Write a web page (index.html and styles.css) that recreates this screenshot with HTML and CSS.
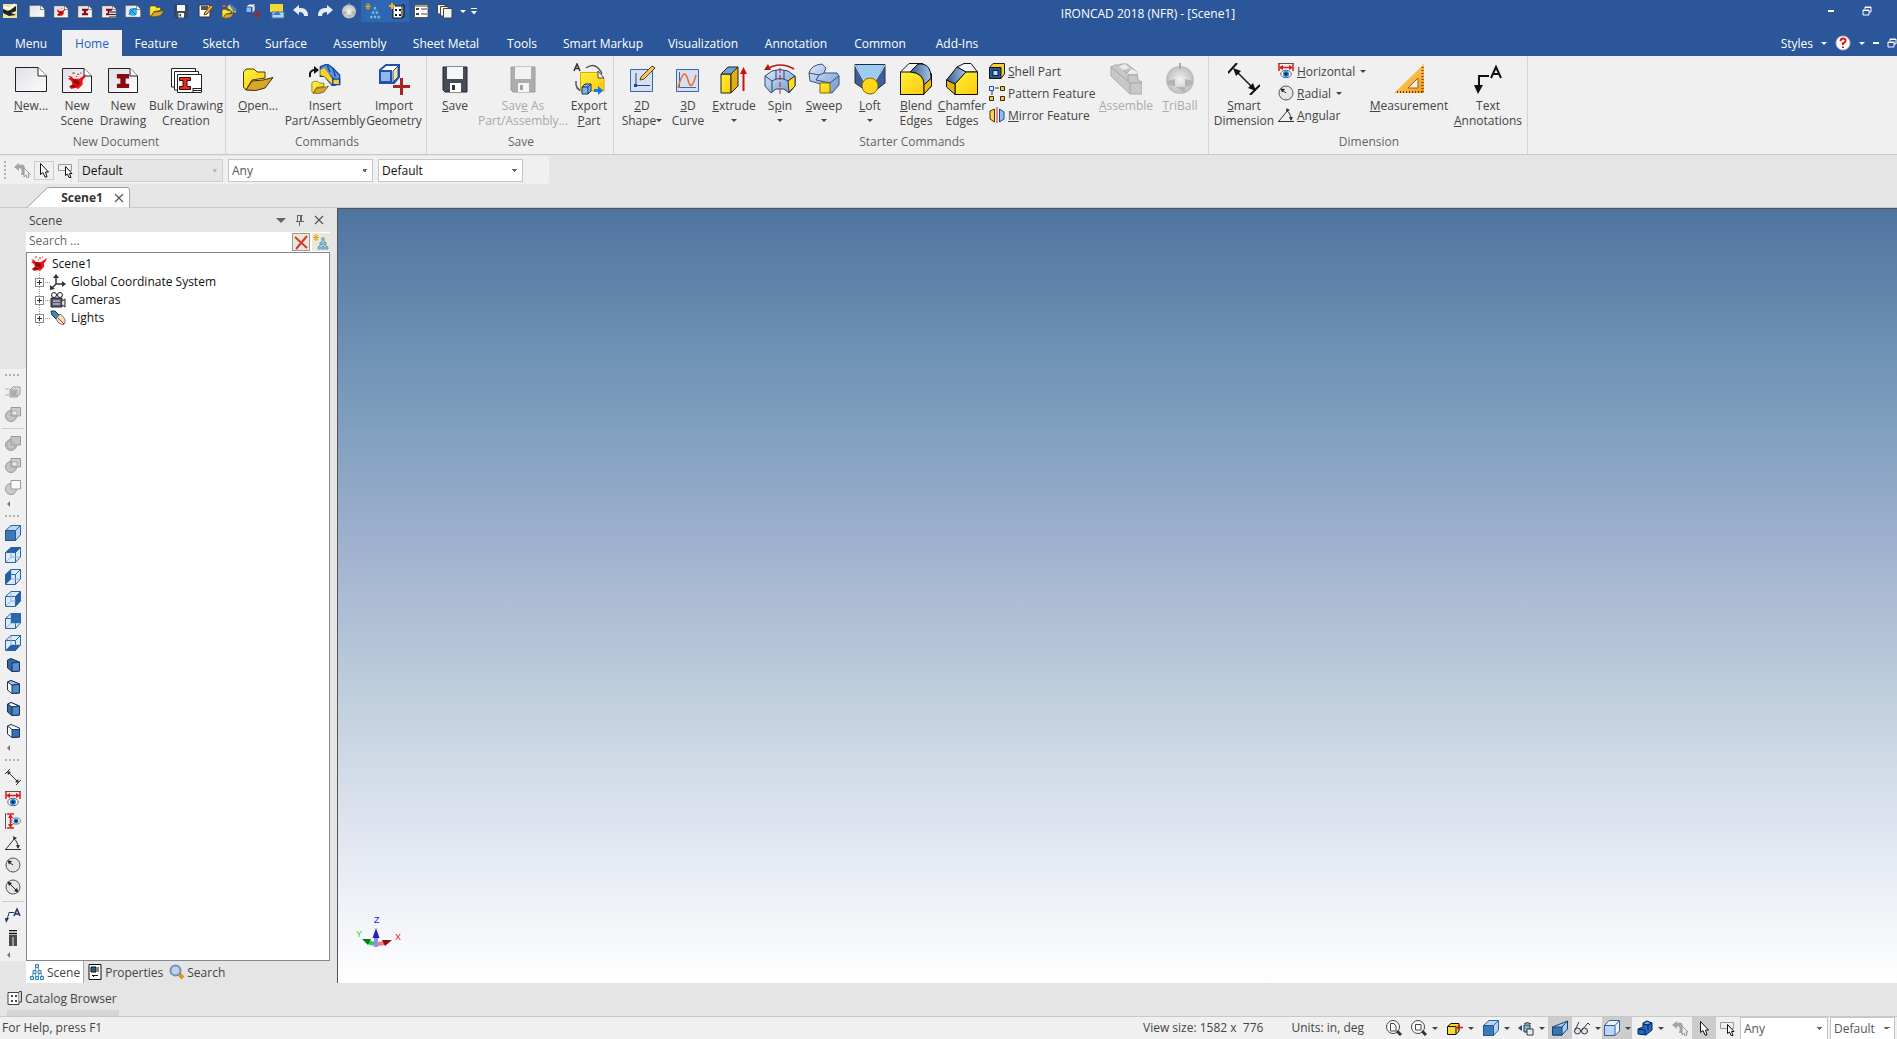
FILE: index.html
```html
<!DOCTYPE html>
<html lang="en">
<head>
<meta charset="utf-8">
<title>IRONCAD 2018 (NFR) - [Scene1]</title>
<link rel="stylesheet" href="styles.css">
</head>
<body>
<svg class="sprite" aria-hidden="true">
  <defs>
    <linearGradient id="paper" x1="0" y1="0" x2="1" y2="1"><stop offset="0" stop-color="#dfe0e6"/><stop offset="1" stop-color="#fdfdfd"/></linearGradient>
    <linearGradient id="gold" x1="0" y1="0" x2="1" y2="1"><stop offset="0" stop-color="#fff23a"/><stop offset="1" stop-color="#ffc80c"/></linearGradient>
    <linearGradient id="steel" x1="0" y1="0" x2="1" y2="1"><stop offset="0" stop-color="#dfeaf8"/><stop offset="1" stop-color="#6f97cf"/></linearGradient>
    <linearGradient id="steeldark" x1="0" y1="0" x2="1" y2="0"><stop offset="0" stop-color="#35598c"/><stop offset="1" stop-color="#a9c4e6"/></linearGradient>
    <linearGradient id="amber" x1="0" y1="0" x2="1" y2="1"><stop offset="0" stop-color="#ffe48a"/><stop offset="1" stop-color="#f09a10"/></linearGradient>
    <radialGradient id="ball"><stop offset="0" stop-color="#f4f4f4"/><stop offset="1" stop-color="#bdbdbd"/></radialGradient>
  </defs>

  <symbol id="page" viewBox="0 0 32 32"><path d="M0.500 4.500H23L31.500 13V28.500H.5Z" fill="url(#paper)" stroke="#222"/><path d="M23 4.500V13H31.500" fill="#fff" stroke="#222"/></symbol>
  <symbol id="part-red" viewBox="0 0 16 16"><path d="M0 3L3 4L5 6H10L13 4L16 2L15 5L13 7V11L9 15L7 14L3 15L1 13L4 11L3 8L0 6L2 5Z" fill="#f01414"/><path d="M4 6L10 8V12L5 10ZM1 13L4 11L8 12.500L6 14Z" fill="#930808"/><path d="M4 1h2M8 2h2M11 1h1M7 4h1" stroke="#d11"/></symbol>
  <symbol id="scene-page" viewBox="0 0 32 32"><path d="M1.500 5.500H23L30.500 13V29.500H1.500Z" fill="url(#paper)" stroke="#222"/><path d="M23 5.500V13H30.500" fill="#fff" stroke="#222"/><use href="#part-red" x="6" y="9" width="20" height="18"/></symbol>
  <symbol id="ibeam" viewBox="0 0 16 16"><path d="M1 0H15V5H11V11H15V16H1V11H5V5H1Z" fill="#870b10"/></symbol>
  <symbol id="drawing-page" viewBox="0 0 32 32"><path d="M1.500 5.500H23L30.500 13V29.500H1.500Z" fill="url(#paper)" stroke="#222"/><path d="M23 5.500V13H30.500" fill="#fff" stroke="#222"/><use href="#ibeam" x="8" y="11" width="16" height="14"/></symbol>
  <symbol id="bulk" viewBox="0 0 32 32"><path d="M1.500 5.500H25.500V24H1.500Z" fill="#fff" stroke="#222"/><path d="M4.500 8.500H28.500V27H4.500Z" fill="#fff" stroke="#222"/><path d="M7.500 11.500H31.500V29.500H7.500Z" fill="#fff" stroke="#222"/><path d="M9.500 14.500H20.500V17.500H17V23.500H20.500V26.500H9.500V23.500H13V17.500H9.500Z" fill="#f02818" stroke="#300"/><path d="M23 25.500h8M23 27.500h8M23 25v4" stroke="#222" fill="none"/></symbol>
  <symbol id="folder" viewBox="0 0 32 32"><path d="M1.500 24V9L4 6H12L15 9H23V15L10 17L4 27Z" fill="url(#gold)" stroke="#4a3c00"/><path d="M4 27L10 18L21 17L31 14.500L23 25Q14 29 4 27Z" fill="#d9a62a" stroke="#3c3000"/></symbol>
  <symbol id="blocks" viewBox="0 0 16 16"><path d="M1 2L6 0L10 3L15 8V14L10 16L4 9H1Z" fill="#5f92dc" stroke="#16489c"/><path d="M6 1L8 6M10 3L12 9M1 3L11 11" stroke="#16489c" fill="none"/><path d="M1 4L4 3L10 11V15L4 9L1 8Z" fill="#ffd21c"/><path d="M10 11H15V15H10Z" fill="#f8c840" stroke="#16489c"/></symbol>
  <symbol id="insert" viewBox="0 0 32 32"><use href="#blocks" x="10" y="1" width="22" height="22"/><use href="#folder" x="0" y="15" width="22" height="18"/><path d="M1 14Q0 7 6 7" fill="none" stroke="#111" stroke-width="2"/><path d="M5 3L10 7L5 11Z" fill="#111"/></symbol>
  <symbol id="import" viewBox="0 0 32 32"><path d="M2 7L8 2H21V14L16 20H2Z" fill="#fff" stroke="#2450a8" stroke-width="2"/><path d="M15 8L20 3V14L15 19Z" fill="#fbe39a" stroke="#2450a8"/><path d="M2 8H13V19H2Z" fill="#8db9f2" stroke="#2450a8" stroke-width="2"/><path d="M22 15h3v7h7v3h-7v7h-3v-7h-7v-3h7z" fill="#a82424"/></symbol>
  <symbol id="floppy" viewBox="0 0 32 32"><path d="M4 4H28V29H6L4 27Z" fill="#454b57" stroke="#23262d"/><path d="M8 4H24V16H8Z" fill="#f5f6f8"/><path d="M11 20H22V29H11Z" fill="#fff"/><path d="M13 22H16V27H13Z" fill="#333"/></symbol>
  <symbol id="export" viewBox="0 0 32 32"><path d="M13 5Q23-2 29 11M3 18Q2 27 10 28" fill="none" stroke="#555" stroke-width="1.500"/><path d="M7.500 9.500H25L31 15V28H7.500Z" fill="url(#gold)" stroke="#dca800"/><path d="M25 8V15H31Z" fill="#fff" stroke="#444"/><path d="M1 8L4 1L7 8M2 5.500H6" fill="none" stroke="#333" stroke-width="1.500"/><path d="M9 24L12 21H18V28L15 31H9Z" fill="#7fb1ea" stroke="#123468"/><path d="M9 24H15V31M15 24L18 21" fill="none" stroke="#123468"/><path d="M21 26H25V23L30 27.500L25 32V29H21Z" fill="#1672f4"/></symbol>
  <symbol id="shape2d" viewBox="0 0 32 32"><path d="M4.500 6.500H26.500V28.500H4.500Z" fill="#d9dfee" stroke="#2d6cb0"/><path d="M10 10V22.500H24" stroke="#174c80" fill="none"/><path d="M8 21h3v3h-3z" fill="#174c80"/><path d="M15 14L26 3L29 5L18 16L14 17Z" fill="#f5c95b" stroke="#5a3a20"/></symbol>
  <symbol id="curve3d" viewBox="0 0 32 32"><path d="M4.500 6.500H26.500V28.500H4.500Z" fill="#d9dfee" stroke="#2d6cb0"/><path d="M7.500 9V24.500H24" fill="none" stroke="#2d6cb0"/><path d="M6 25Q12 2 16 17Q19 30 24 12" fill="none" stroke="#f06a22" stroke-width="1.500"/></symbol>
  <symbol id="extrude" viewBox="0 0 32 32"><path d="M3 11H13V30H3Z" fill="url(#gold)" stroke="#222"/><path d="M3 11L10 4H20L13 11Z" fill="#6fa1dd" stroke="#222"/><path d="M13 11L20 4V23L13 30Z" fill="#e0b012" stroke="#222"/><path d="M25.500 28V9" stroke="#d01010" stroke-width="2"/><path d="M22 11L25.500 4L29 11Z" fill="#d01010"/></symbol>
  <symbol id="spin" viewBox="0 0 32 32"><path d="M1 13L8 8Q16 5 24 8L31 13V23L25 30L20 26H12L7 30L1 23Z" fill="url(#steel)" stroke="#2b4672"/><path d="M1 13L8 18Q16 13 24 18L31 13M8 18V29M12 7V16M20 7V16" stroke="#2b4672" fill="none"/><path d="M24 18L31 13V23L25 29Z" fill="#ffdc1c" stroke="#333"/><path d="M3 6Q16-2 30 6" stroke="#b01818" fill="none" stroke-width="1.500"/><path d="M0 7L4 1L7 7Z" fill="#b01818"/><path d="M16 5V31" stroke="#d01818" stroke-dasharray="5 2"/></symbol>
  <symbol id="sweep" viewBox="0 0 32 32"><path d="M1 10Q3 2 14 1L18 5L16 10L29 10L31 13V22L24 30L13 28V21L2 18Z" fill="url(#steel)" stroke="#334f80"/><path d="M1 10L11 12L8 17L22 20L31 13M11 12L16 10" fill="none" stroke="#334f80"/><path d="M12 20H22V30H12Z" fill="url(#gold)" stroke="#8c6400"/></symbol>
  <symbol id="loft" viewBox="0 0 32 32"><path d="M1 1.500H31V20L17 31L1 20Z" fill="#405f92" stroke="#1f2c48"/><path d="M2 2H30L21 18H10Z" fill="#9bcdf2"/><path d="M1 2L10 18M31 2L21 18" stroke="#dceaff"/><circle cx="16" cy="23" r="8" fill="#ffd61a" stroke="#8e6900"/></symbol>
  <symbol id="blend" viewBox="0 0 32 32"><path d="M.5 9L9 .5H23L31.500 11V23L23 31.500H.5Z" fill="#f2f4f8" stroke="#111"/><path d="M10 9L18 1H22Q31 2 31 15L24 22Q24 10 10 9Z" fill="url(#steeldark)" stroke="#111"/><path d="M.5 9H10Q24 10 24 22V31.500H.5Z" fill="url(#gold)" stroke="#111"/><path d="M24 22L31.500 15V23L24 31Z" fill="#ecb90c" stroke="#111"/></symbol>
  <symbol id="chamfer" viewBox="0 0 32 32"><path d="M11 4L18 .5H25L31.500 9H20Z" fill="#f2f4f8" stroke="#111"/><path d="M.5 17L11 4L20 9L9 21Z" fill="url(#steeldark)" stroke="#111"/><path d="M9 21L20 9H31.500V31.500H9Z" fill="url(#gold)" stroke="#111"/><path d="M.5 17L9 21V31.500L.5 24Z" fill="#e6b210" stroke="#111"/></symbol>
  <symbol id="shell" viewBox="0 0 16 16"><path d="M.5 4.500L4 .5H15.500V11L12 15.500H.5Z" fill="#f6cf35" stroke="#222"/><path d="M.5 4.500H12V15.500H.5Z" fill="#26558f" stroke="#111"/><path d="M4 7.500H9V12.500H4Z" fill="#b9dcfa" stroke="#0b2040"/></symbol>
  <symbol id="pattern" viewBox="0 0 16 16"><path d="M3 5V10M6 3H10" stroke="#333"/><path d="M.5 1.500h4v4h-4z" fill="#e8f2ff" stroke="#1748b8"/><path d="M11.500 1.500h4v4h-4zM.5 11.500h4v4h-4zM11.500 11.500h4v4h-4z" fill="#f5c94a" stroke="#3a2c00"/></symbol>
  <symbol id="mirror" viewBox="0 0 16 16"><path d="M5.500 2V15L1 12V4Z" fill="#f8d648" stroke="#40330a"/><path d="M10.500 2L15 5V12L10.500 15Z" fill="#8fbdf4" stroke="#1748a0"/><path d="M8 0V16" stroke="#e01818"/></symbol>
  <symbol id="assemble" viewBox="0 0 32 32"><path d="M1 4L5 2H9L12 1H17L21 4L27 9L28 17L32 19V31H20L1 13Z" fill="#c8c8c8" stroke="#aaa"/><path d="M1 4L20 20H32M20 20V31M16 10L21 6M27 12H18V18M18 11L12 6" stroke="#a4a4a4" fill="none"/><path d="M9 3L15 1L19 5L13 7ZM17 11L21 6L26 8L28 11Z" fill="#ececec"/></symbol>
  <symbol id="triball" viewBox="0 0 32 32"><circle cx="16" cy="17" r="14" fill="url(#ball)"/><path d="M16 0V6" stroke="#aaa" stroke-width="2"/><path d="M3 18L11 16V23L4 22M29 18L21 16V24L28 22M12 24H21V30" fill="#b3b3b3"/></symbol>
  <symbol id="smartdim" viewBox="0 0 32 32"><path d="M0 10L9 0M22 32L32 22" stroke="#111" stroke-width="2"/><path d="M8 8L25 25" stroke="#111" stroke-width="1.500"/><path d="M5 5L13 8L8 13ZM28 28L20 25L25 20Z" fill="#111"/></symbol>
  <symbol id="measure" viewBox="0 0 32 32"><path d="M1 30L31 1V30Z" fill="url(#amber)"/><path d="M15 25L25 15V25Z" fill="#f3eee4" stroke="#a65d16"/><path d="M4 29H30M29.500 4V30" stroke="#5b3b1a" stroke-width="2" stroke-dasharray="1 2"/></symbol>
  <symbol id="textnote" viewBox="0 0 32 32"><path d="M17 13H7V24" fill="none" stroke="#111" stroke-width="2"/><path d="M2 22H11L6 31Z" fill="#111"/><path d="M19 15L24 4L29 15M21 11H27" fill="none" stroke="#111" stroke-width="2"/></symbol>
  <symbol id="eye" viewBox="0 0 16 16"><ellipse cx="8" cy="8" rx="7" ry="5" fill="#fff" stroke="#333"/><circle cx="8" cy="8" r="4" fill="#1484dc"/><circle cx="8" cy="8" r="2" fill="#06254a"/></symbol>
  <symbol id="horizontal" viewBox="0 0 16 16"><path d="M0 .5H16" stroke="#555"/><path d="M1 1V8M15 1V8M2 4.500H14" stroke="#e01818" stroke-width="1.500"/><path d="M1 4.500L5 2V7ZM15 4.500L11 2V7Z" fill="#e01818"/><use href="#eye" x="2" y="5" width="12" height="12"/></symbol>
  <symbol id="vertical" viewBox="0 0 16 16"><path d="M.5 0V16" stroke="#555"/><path d="M2 1H9M2 15H9M5.500 2V14" stroke="#e01818" stroke-width="1.500"/><path d="M5.500 1L3 5H8ZM5.500 15L3 11H8Z" fill="#e01818"/><use href="#eye" x="6" y="3" width="10" height="10"/></symbol>
  <symbol id="radial" viewBox="0 0 16 16"><circle cx="8" cy="8" r="7" fill="#e6e6e6" stroke="#555"/><path d="M8 8L4 5" stroke="#222"/><path d="M2.500 3.500L7 4L4 7.500Z" fill="#222"/></symbol>
  <symbol id="diameter" viewBox="0 0 16 16"><circle cx="8" cy="8" r="7" fill="#e6e6e6" stroke="#555"/><path d="M4 4L12 12" stroke="#222"/><path d="M2.500 2.500L7 4L4 7ZM13.500 13.500L9 12L12 9Z" fill="#222"/></symbol>
  <symbol id="angular" viewBox="0 0 16 16"><path d="M0 14.500H16M1 14L10 3M8 3Q13 6 13 13" stroke="#333" fill="none"/><path d="M8 1L12 3L9 5ZM11 10H15L13 14Z" fill="#333"/></symbol>
  <symbol id="linear" viewBox="0 0 16 16"><path d="M0 5L5 0M11 16L16 11M3 3L13 13" stroke="#333"/><path d="M2 2L6 3L3 6ZM14 14L10 13L13 10Z" fill="#333"/></symbol>
  <symbol id="leader" viewBox="0 0 16 16"><path d="M9 4.500H4L2 12" fill="none" stroke="#1b3765"/><path d="M0 10H4L1 15Z" fill="#1b3765"/><path d="M9 8L12 1L15 8M10 6H14" fill="none" stroke="#1b3765" stroke-width="1.500"/></symbol>
  <symbol id="bolt" viewBox="0 0 16 16"><path d="M4 .5H12M4 3.500H12M4 6H12" stroke="#111" stroke-width="1.500"/><path d="M4 7H12V16H4Z" fill="#4b4b4b"/><path d="M7 7h2v9h-2z" fill="#999"/></symbol>

  <symbol id="redo-cursor" viewBox="0 0 16 16"><path d="M0 5L5 1V3Q11 1 11 8L10 13H7Q9 6 5 6V9Z" fill="#a5a5a5"/><path d="M10 6V15L12 13L13 16L15 15L14 12H16Z" fill="#eee" stroke="#999"/></symbol>
  <symbol id="cursor" viewBox="0 0 16 16"><path d="M4.500 1.500V12.500L7 10.500L9 15H11L9.500 10H12.500Z" fill="#fff" stroke="#111"/></symbol>
  <symbol id="box-cursor" viewBox="0 0 16 16"><path d="M.5 2.500H13.500V8.500H.5Z" fill="none" stroke="#999"/><path d="M7.500 4.500V13.500L9.500 12L11 15.500H13L11.500 11.500H14Z" fill="#fff" stroke="#111"/></symbol>

  <symbol id="app" viewBox="0 0 16 16"><path d="M1 1H15V15H1Z" fill="#e9e3a4"/><path d="M1 6L6 8L14 3V8L9 10L14 12L7 13L1 10Z" fill="#222"/><path d="M2 4L8 6L13 1" stroke="#fff" stroke-width="2" fill="none"/></symbol>
  <symbol id="drawing-list" viewBox="0 0 16 16"><use href="#drawing-page" width="16" height="16"/><path d="M8 8h7v7h-7z" fill="#ddd"/><path d="M8 9h7M8 11.500h7M8 14h7" stroke="#222"/></symbol>
  <symbol id="web-page" viewBox="0 0 16 16"><use href="#page" width="16" height="16"/><circle cx="8" cy="9" r="4" fill="#35b7e8"/><path d="M4 12Q7 4 12 6M5 6L11 12" stroke="#1565b8" fill="none"/></symbol>
  <symbol id="save-pen" viewBox="0 0 16 16"><path d="M2 2H13V14H2Z" fill="#fff" stroke="#333"/><path d="M4 3h7v4h-7z" fill="#555"/><path d="M7 12L8 9L14 2L16 4L10 11Z" fill="#f4b23a" stroke="#6a4216"/></symbol>
  <symbol id="folder-blocks" viewBox="0 0 16 16"><use href="#blocks" x="6" y="0" width="10" height="11"/><use href="#folder" x="0" y="4" width="14" height="13"/><path d="M1 3h4" stroke="#e44" stroke-width="2"/></symbol>
  <symbol id="export-small" viewBox="0 0 16 16"><path d="M1 1H14V9H1Z" fill="#f6d633"/><path d="M3 9H15V15H3Z" fill="#b9d4ec" stroke="#4178b4"/><path d="M3 12L9 8L12 12" fill="#3b7ad0"/></symbol>
  <symbol id="undo" viewBox="0 0 16 16"><path d="M0 7L6 2V5Q15 4 15 13H11Q11 9 6 9V12Z" fill="#e8edf5"/></symbol>
  <symbol id="redo" viewBox="0 0 16 16"><path d="M16 7L10 2V5Q1 4 1 13H5Q5 9 10 9V12Z" fill="#e8edf5"/></symbol>
  <symbol id="tree" viewBox="0 0 16 16"><path d="M8 2L5 8L2 14M8 2L11 8L14 14M5 8L8 14M11 8L8 14" stroke="#4e93bd" fill="none"/><path d="M6.500 .5h3v3h-3zM4 6.500h3v3H4zM9 6.500h3v3H9zM1.500 12.500h3v3h-3zM6.500 12.500h3v3h-3zM11.500 12.500h3v3h-3z" fill="#c3e0f0" stroke="#3282b4"/></symbol>
  <symbol id="tree-star" viewBox="0 0 16 16"><use href="#tree" x="4" y="3" width="12" height="13"/><path d="M3 0V7M0 3.500H6M1 1L5 6M5 1L1 6" stroke="#e5a51c"/></symbol>
  <symbol id="catalog-star" viewBox="0 0 16 16"><path d="M4 3H13V15H4Z" fill="#fff" stroke="#111"/><path d="M13 2h2v12h-2" fill="#777" stroke="#111"/><path d="M6 6h2v2H6zM10 6h2v2h-2zM6 11h2v2H6zM10 11h2v2h-2z" fill="#111"/><path d="M3 0V6M0 3H6" stroke="#f2b51c" stroke-width="2"/></symbol>
  <symbol id="catalog" viewBox="0 0 16 16"><path d="M1 2.500H12V14.500H1Z" fill="#fff" stroke="#444"/><path d="M12 1.500H14.500V12H12" fill="#ccc" stroke="#444"/><path d="M4 5h2v2H4zM8 5h2v2H8zM4 10h2v2H4zM8 10h2v2H8z" fill="#444"/></symbol>
  <symbol id="listview" viewBox="0 0 16 16"><path d="M1.500 1.500H15V14.500H1.500Z" fill="#fff" stroke="#555"/><path d="M3 5h3v2H3zM3 10h3v2H3z" fill="#444"/><path d="M8 6h6M8 11h6M2 3h13" stroke="#444"/></symbol>
  <symbol id="stack" viewBox="0 0 16 16"><path d="M.5 1.500H8V11H.5Z" fill="#f2f2f2" stroke="#444"/><path d="M3.500 3.500H11V13H3.500Z" fill="#f2f2f2" stroke="#444"/><path d="M6.500 5.500H15V15H6.500Z" fill="#f2f2f2" stroke="#444"/></symbol>
  <symbol id="overflow" viewBox="0 0 10 10"><path d="M2 2.500H8" stroke="#fff"/><path d="M2 5H8L5 8.500Z" fill="#fff"/></symbol>
  <symbol id="restore" viewBox="0 0 10 10"><path d="M3 3V1H9V6H7M3 1.500H9M1 4.500H7" fill="none" stroke="#fff" stroke-width="1"/><path d="M1 4H7V9H1Z" fill="none" stroke="#fff"/></symbol>
  <symbol id="help" viewBox="0 0 16 16"><circle cx="8" cy="8" r="7" fill="#fff" stroke="#bbb"/><path d="M5.500 6Q6 3.500 8 3.500Q11 3.500 10.500 6Q10 7.500 8 8.500V10M8 11.500V13" stroke="#e01010" stroke-width="2" fill="none"/></symbol>
  <symbol id="pin" viewBox="0 0 16 16"><path d="M5.500 3V9M5 3.500H10.500M9.500 3V9M8.500 3V9M4 9.500H12M7.500 10V14" stroke="#666" fill="none"/></symbol>
  <symbol id="close" viewBox="0 0 16 16"><path d="M4 4L12 12M12 4L4 12" stroke="#555" stroke-width="1.200"/></symbol>
  <symbol id="redx" viewBox="0 0 16 16"><path d="M2 3L14 14M14 2L3 15" stroke="#d43a35" stroke-width="2"/></symbol>
  <symbol id="axes" viewBox="0 0 16 16"><path d="M6 2V10H14M6 10L2 14" stroke="#333" stroke-width="1.500" fill="none"/><path d="M3 4L6 0L9 4ZM12 7L16 10L12 13ZM0 16V11L5 15Z" fill="#333"/></symbol>
  <symbol id="camera" viewBox="0 0 16 16"><circle cx="4" cy="3" r="2.500" fill="#fff" stroke="#222"/><circle cx="10" cy="3" r="2.500" fill="#fff" stroke="#222"/><path d="M1 6H12V15H1Z" fill="#555970" stroke="#222"/><path d="M12 9L15 7V15L12 13" fill="#ddd" stroke="#222"/><path d="M3 9h7M3 12h7" stroke="#e8e8f0"/></symbol>
  <symbol id="light" viewBox="0 0 16 16"><path d="M1 1L5 1L9 5L6 9L2 5Z" fill="#3f87b8" stroke="#234"/><path d="M10 4Q16 8 15 13L13 15Q8 14 6 9Z" fill="#f7e4bc" stroke="#777"/><path d="M8 8L14 14" stroke="#e02020"/></symbol>
  <symbol id="props" viewBox="0 0 16 16"><path d="M2 .5H14V15.500H2Z" fill="#fff" stroke="#111"/><path d="M4 3H9V8H4Z" fill="#2c5e94" stroke="#111"/><path d="M11 3v5M5 11.500h6M5 11l2 2" stroke="#111"/></symbol>
  <symbol id="lens" viewBox="0 0 16 16"><path d="M10 10L14 14" stroke="#d99a1e" stroke-width="4"/><circle cx="6.500" cy="6.500" r="5" fill="#b8d2f2" stroke="#7d8cae" stroke-width="2"/></symbol>

  <symbol id="g-cube" viewBox="0 0 16 16"><path d="M5 6L8 3H15V10L12 13H5Z" fill="#ddd" stroke="#999"/><path d="M5 6H12V13" fill="none" stroke="#999"/><path d="M6 7h5v5H6z" fill="#aaa"/><path d="M0 5h4M0 11h4" stroke="#aaa"/></symbol>
  <symbol id="g-union" viewBox="0 0 16 16"><circle cx="6" cy="10" r="5.500" fill="#c4c4c4" stroke="#999"/><path d="M6 1.500H15.500V10H6Z" fill="#c4c4c4" stroke="#999"/><circle cx="6" cy="10" r="4" fill="none" stroke="#adadad"/></symbol>
  <symbol id="g-sub" viewBox="0 0 16 16"><circle cx="6" cy="10" r="5.500" fill="#c4c4c4" stroke="#999"/><path d="M6 1.500H15.500V10H6Z" fill="#ccc" stroke="#999"/><path d="M7 5h5v4h-5z" fill="#eee" stroke="#aaa"/></symbol>
  <symbol id="g-int" viewBox="0 0 16 16"><circle cx="6" cy="10" r="5.500" fill="#ccc" stroke="#999"/><path d="M6 1.500H15.500V10H6Z" fill="#fafafa" stroke="#999"/></symbol>

  <symbol id="c-base" viewBox="0 0 16 16"><path d="M.5 5.500L6 .5H15.500V10L10.500 15.500H.5Z" fill="#dcebfa" stroke="#2a64a6"/><path d="M.5 5.500H10.500V15.500M10.500 5.500L15.500 .5" fill="none" stroke="#2a64a6"/><path d="M6 1V10H15M6 10L1 15" fill="none" stroke="#8db4dc"/></symbol>
  <symbol id="c-front" viewBox="0 0 16 16"><path d="M.5 5.500L6 .5H15.500V10L10.500 15.500H.5Z" fill="#b8d6f4" stroke="#2a64a6"/><path d="M10.500 5.500L15.500 .5" stroke="#2a64a6"/><path d="M.5 5.500H10.500V15.500H.5Z" fill="#3d78b8" stroke="#1f5698"/></symbol>
  <symbol id="c-top" viewBox="0 0 16 16"><use href="#c-base"/><path d="M.5 5.500L6 .5H15.500L10.500 5.500Z" fill="#2360a5"/></symbol>
  <symbol id="c-left" viewBox="0 0 16 16"><use href="#c-base"/><path d="M.5 5.500L6 .5V10L.5 15.500Z" fill="#2360a5"/></symbol>
  <symbol id="c-right" viewBox="0 0 16 16"><use href="#c-base"/><path d="M10.500 5.500L15.500 .5V10L10.500 15.500Z" fill="#2360a5"/></symbol>
  <symbol id="c-back" viewBox="0 0 16 16"><use href="#c-base"/><path d="M6 .5H15.500V10H6Z" fill="#2b68ac"/></symbol>
  <symbol id="c-bottom" viewBox="0 0 16 16"><use href="#c-base"/><path d="M.5 15.500L6 10H15.500L10.500 15.500Z" fill="#2360a5"/></symbol>
  <symbol id="i-a" viewBox="0 0 16 16"><path d="M2.500 3L6 1.500L14.500 5V14L7 14.500L2.500 11Z" fill="#2d69ab" stroke="#1c3356"/><path d="M7 6L14.500 5V14L7 14.500Z" fill="#5591d0" stroke="#1c3356"/></symbol>
  <symbol id="i-b" viewBox="0 0 16 16"><path d="M2.500 3L6 1.500L14.500 5V14L7 14.500L2.500 11Z" fill="#fff" stroke="#1c3356"/><path d="M7 6L14.500 5V14L7 14.500Z" fill="#4b8acb" stroke="#1c3356"/><path d="M2.500 3L6 1.500L14.500 5L7 6Z" fill="#a9c9ea" stroke="#1c3356"/></symbol>
  <symbol id="i-c" viewBox="0 0 16 16"><path d="M2.500 3L6 1.500L14.500 5V14L7 14.500L2.500 11Z" fill="#2d69ab" stroke="#1c3356"/><path d="M3 3L6 1.500L14 5L7 6Z" fill="#fff" stroke="#1c3356"/><path d="M7 6L14.500 5V14L7 14.500Z" fill="#4b8acb" stroke="#1c3356"/></symbol>
  <symbol id="i-d" viewBox="0 0 16 16"><path d="M2.500 3L6 1.500L14.500 5V14L7 14.500L2.500 11Z" fill="#fff" stroke="#1c3356"/><path d="M7 6.500H14.500V14L7 14.500Z" fill="#2f70b8" stroke="#1c3356"/><path d="M2.500 3L7 6.500" stroke="#1c3356"/></symbol>

  <symbol id="zoom-page" viewBox="0 0 16 16"><circle cx="7" cy="7" r="6.500" fill="#fff" stroke="#444"/><path d="M4.500 3.500H8L10 6V11H4.500Z" fill="#fff" stroke="#444"/><path d="M11 11L15 15" stroke="#333" stroke-width="3"/></symbol>
  <symbol id="zoom-box" viewBox="0 0 16 16"><circle cx="7" cy="7" r="6.500" fill="#fff" stroke="#444"/><path d="M4.500 4.500H10V10H4.500Z" fill="none" stroke="#444"/><path d="M11 11L15 15" stroke="#333" stroke-width="3"/></symbol>
  <symbol id="look" viewBox="0 0 16 16"><path d="M.5 6.500L4 3.500H12V11L9 14.500H.5Z" fill="#f7d83c" stroke="#111"/><path d="M.5 6.500H9V14" fill="none" stroke="#111"/><path d="M11 7.500H16" stroke="#d01818" stroke-width="1.500"/><path d="M9 7.500L13 4.500V10.500Z" fill="#d01818"/></symbol>
  <symbol id="cam-look" viewBox="0 0 16 16"><path d="M0 8L4 5V11Z" fill="#1c4c80"/><path d="M6 4Q9 1 13 4M6 5h6v7H6z" fill="#75b8e4" stroke="#333"/><path d="M9 9h6v6H9z" fill="#eee" stroke="#333"/></symbol>
  <symbol id="wedge" viewBox="0 0 16 16"><path d="M.5 7L15.500 1V9L10 15H.5Z" fill="#a9cdf0" stroke="#1b3e70"/><path d="M.5 7H10V15H.5Z" fill="#3b74b4" stroke="#1b3e70"/><path d="M10 7L15.500 1" stroke="#1b3e70"/></symbol>
  <symbol id="glasses" viewBox="0 0 16 16"><circle cx="3.500" cy="11" r="3" fill="#dce8f5" stroke="#333"/><circle cx="10.500" cy="11" r="3" fill="#dce8f5" stroke="#333"/><path d="M1 10L5 2M8 10L14 3L16 5" fill="none" stroke="#333"/></symbol>
  <symbol id="soft-cube" viewBox="0 0 16 16"><path d="M.5 5.500L5 .5H15.500V11L11 15.500H.5Z" fill="#eaf3ff" stroke="#3d5e92"/><path d="M.5 5.500H11V15.500H.5Z" fill="#b9d6f8" stroke="#3d5e92"/><path d="M11 5.500L15 1" stroke="#3d5e92"/></symbol>
  <symbol id="blue-blocks" viewBox="0 0 16 16"><path d="M1 9L6 7V3L10 1L15 3V10L9 15L1 14Z" fill="#1c69c4" stroke="#0c2444"/><path d="M1 9L8 10V15M6 4L11 5L15 3M11 5V10" stroke="#0c2444" fill="none"/><path d="M7 4L10 2L13 3L11 4Z" fill="#76b2f4"/></symbol>
</svg>

<div class="app">
  <header class="titlebar">
    <div class="qat">
      <svg class="i16 logo"><use href="#app"/></svg>
      <button aria-label="New"><svg class="i16"><use href="#page"/></svg></button>
      <button aria-label="New scene"><svg class="i16"><use href="#scene-page"/></svg></button>
      <button aria-label="New drawing"><svg class="i16"><use href="#drawing-page"/></svg></button>
      <button aria-label="Bulk drawing"><svg class="i16"><use href="#drawing-list"/></svg></button>
      <button aria-label="Web page"><svg class="i16"><use href="#web-page"/></svg></button>
      <button aria-label="Open"><svg class="i16"><use href="#folder"/></svg></button>
      <button aria-label="Save"><svg class="i16"><use href="#floppy"/></svg></button>
      <button aria-label="Save as"><svg class="i16"><use href="#save-pen"/></svg></button>
      <button aria-label="Insert part"><svg class="i16"><use href="#folder-blocks"/></svg></button>
      <button aria-label="Import geometry"><svg class="i16"><use href="#import"/></svg></button>
      <button aria-label="Export part"><svg class="i16"><use href="#export-small"/></svg></button>
      <button aria-label="Undo"><svg class="i16"><use href="#undo"/></svg></button>
      <button aria-label="Redo"><svg class="i16"><use href="#redo"/></svg></button>
      <button aria-label="TriBall"><svg class="i16"><use href="#triball"/></svg></button>
      <button class="on" aria-label="Scene browser"><svg class="i16"><use href="#tree-star"/></svg></button>
      <button class="on" aria-label="Catalog browser"><svg class="i16"><use href="#catalog-star"/></svg></button>
      <button aria-label="Property list"><svg class="i16"><use href="#listview"/></svg></button>
      <button aria-label="Windows"><svg class="i16"><use href="#stack"/></svg></button>
      <button class="narrow" aria-label="More windows"><i class="caret"></i></button>
      <button class="narrow" aria-label="Customize toolbar"><svg class="i10"><use href="#overflow"/></svg></button>
    </div>
    <h1 class="title">IRONCAD 2018 (NFR) - [Scene1]</h1>
    <div class="winctl">
      <button aria-label="Minimize"><i class="dash"></i></button>
      <button aria-label="Restore"><svg class="i10"><use href="#restore"/></svg></button>
    </div>
  </header>

  <nav class="tabs">
    <button class="w62">Menu</button>
    <button class="w60 active">Home</button>
    <button class="w68">Feature</button>
    <button class="w62">Sketch</button>
    <button class="w68">Surface</button>
    <button class="w80">Assembly</button>
    <button class="w92">Sheet Metal</button>
    <button class="w60">Tools</button>
    <button class="w102">Smart Markup</button>
    <button class="w98">Visualization</button>
    <button class="w88">Annotation</button>
    <button class="w80">Common</button>
    <button class="w74">Add-Ins</button>
    <div class="tabs-right">
      <button>Styles <i class="caret"></i></button>
      <button aria-label="Help"><svg class="i16"><use href="#help"/></svg><i class="caret"></i></button>
      <button aria-label="Minimize document"><i class="dash"></i></button>
      <button aria-label="Restore document"><svg class="i10"><use href="#restore"/></svg></button>
    </div>
  </nav>

  <section class="ribbon">
    <div class="group">
      <div class="tools">
        <button class="big w48"><svg class="i32"><use href="#page"/></svg><span><u>N</u>ew...</span></button>
        <button class="big w44"><svg class="i32"><use href="#scene-page"/></svg><span>New<br>Scene</span></button>
        <button class="big w48"><svg class="i32"><use href="#drawing-page"/></svg><span>New<br>Drawing</span></button>
        <button class="big w78"><svg class="i32"><use href="#bulk"/></svg><span>Bulk Drawing<br>Creation</span></button>
      </div>
      <h2>New Document</h2>
    </div>
    <div class="group">
      <div class="tools">
        <button class="big w56"><svg class="i32"><use href="#folder"/></svg><span><u>O</u>pen...</span></button>
        <button class="big w78"><svg class="i32"><use href="#insert"/></svg><span>Insert<br>Part/Assembly</span></button>
        <button class="big w60"><svg class="i32"><use href="#import"/></svg><span>Import<br>Geometry</span></button>
      </div>
      <h2>Commands</h2>
    </div>
    <div class="group">
      <div class="tools">
        <button class="big w48"><svg class="i32"><use href="#floppy"/></svg><span><u>S</u>ave</span></button>
        <button class="big w88" disabled><svg class="i32 faded"><use href="#floppy"/></svg><span>Sav<u>e</u> As<br>Part/Assembly...</span></button>
        <button class="big w44"><svg class="i32"><use href="#export"/></svg><span>Export<br><u>P</u>art</span></button>
      </div>
      <h2>Save</h2>
    </div>
    <div class="group">
      <div class="tools">
        <button class="big w48"><svg class="i32"><use href="#shape2d"/></svg><span><u>2</u>D<br>Shape<i class="caret"></i></span></button>
        <button class="big w44"><svg class="i32"><use href="#curve3d"/></svg><span><u>3</u>D<br>Curve</span></button>
        <button class="big w48"><svg class="i32"><use href="#extrude"/></svg><span><u>E</u>xtrude<br><i class="caret"></i></span></button>
        <button class="big w44"><svg class="i32"><use href="#spin"/></svg><span>S<u>p</u>in<br><i class="caret"></i></span></button>
        <button class="big w44"><svg class="i32"><use href="#sweep"/></svg><span><u>S</u>weep<br><i class="caret"></i></span></button>
        <button class="big w48"><svg class="i32"><use href="#loft"/></svg><span><u>L</u>oft<br><i class="caret"></i></span></button>
        <button class="big w44"><svg class="i32"><use href="#blend"/></svg><span><u>B</u>lend<br>Edges</span></button>
        <button class="big w48"><svg class="i32"><use href="#chamfer"/></svg><span><u>C</u>hamfer<br>Edges</span></button>
        <div class="stack w112">
          <button><svg class="i16"><use href="#shell"/></svg><span><u>S</u>hell Part</span></button>
          <button><svg class="i16"><use href="#pattern"/></svg><span>Pattern Feature</span></button>
          <button><svg class="i16"><use href="#mirror"/></svg><span><u>M</u>irror Feature</span></button>
        </div>
        <button class="big w56" disabled><svg class="i32"><use href="#assemble"/></svg><span><u>A</u>ssemble</span></button>
        <button class="big w52" disabled><svg class="i32"><use href="#triball"/></svg><span><u>T</u>riBall</span></button>
      </div>
      <h2>Starter Commands</h2>
    </div>
    <div class="group">
      <div class="tools">
        <button class="big w62"><svg class="i32"><use href="#smartdim"/></svg><span><u>S</u>mart<br>Dimension</span></button>
        <div class="stack w92">
          <button><svg class="i16"><use href="#horizontal"/></svg><span><u>H</u>orizontal</span><i class="caret"></i></button>
          <button><svg class="i16"><use href="#radial"/></svg><span><u>R</u>adial</span><i class="caret"></i></button>
          <button><svg class="i16"><use href="#angular"/></svg><span><u>A</u>ngular</span></button>
        </div>
        <button class="big w84"><svg class="i32"><use href="#measure"/></svg><span><u>M</u>easurement</span></button>
        <button class="big w74"><svg class="i32"><use href="#textnote"/></svg><span>Text<br><u>A</u>nnotations</span></button>
      </div>
      <h2>Dimension</h2>
    </div>
  </section>

  <section class="selectbar">
    <div class="selectbar-inner">
      <i class="grip-v"></i>
      <button aria-label="Reselect"><svg class="i16"><use href="#redo-cursor"/></svg></button>
      <button class="boxed" aria-label="Select"><svg class="i16"><use href="#cursor"/></svg></button>
      <button aria-label="Box select"><svg class="i16"><use href="#box-cursor"/></svg></button>
      <select class="combo" disabled aria-label="Selection style"><option>Default</option></select>
      <select class="combo muted" aria-label="Selection filter"><option>Any</option></select>
      <select class="combo" aria-label="Configuration"><option>Default</option></select>
    </div>
  </section>

  <section class="doctabs">
    <button class="doctab">
      <svg class="doctab-shape" viewBox="0 0 104 21"><path d="M0 20.500L18 3Q20 .5 23 .5H100Q102.500 .5 102.500 3V20.500" fill="#fff" stroke="#a0a0a0"/></svg>
      <b>Scene1</b><svg class="i16"><use href="#close"/></svg>
    </button>
  </section>

  <main class="work">
    <aside class="strip">
      <div class="strip-inner">
        <i class="grip-h"></i>
        <button aria-label="Extrude face"><svg class="i16"><use href="#g-cube"/></svg></button>
        <button aria-label="Boolean"><svg class="i16"><use href="#g-sub"/></svg></button>
        <hr>
        <button aria-label="Union"><svg class="i16"><use href="#g-union"/></svg></button>
        <button aria-label="Subtract"><svg class="i16"><use href="#g-sub"/></svg></button>
        <button aria-label="Intersect"><svg class="i16"><use href="#g-int"/></svg></button>
        <i class="more"></i>
        <i class="grip-h"></i>
        <button aria-label="Front"><svg class="i16"><use href="#c-front"/></svg></button>
        <button aria-label="Top"><svg class="i16"><use href="#c-top"/></svg></button>
        <button aria-label="Left"><svg class="i16"><use href="#c-left"/></svg></button>
        <button aria-label="Right"><svg class="i16"><use href="#c-right"/></svg></button>
        <button aria-label="Back"><svg class="i16"><use href="#c-back"/></svg></button>
        <button aria-label="Bottom"><svg class="i16"><use href="#c-bottom"/></svg></button>
        <button aria-label="Isometric 1"><svg class="i16"><use href="#i-a"/></svg></button>
        <button aria-label="Isometric 2"><svg class="i16"><use href="#i-b"/></svg></button>
        <button aria-label="Isometric 3"><svg class="i16"><use href="#i-c"/></svg></button>
        <button aria-label="Isometric 4"><svg class="i16"><use href="#i-d"/></svg></button>
        <i class="more"></i>
        <i class="grip-h"></i>
        <button aria-label="Smart dimension"><svg class="i16"><use href="#linear"/></svg></button>
        <button aria-label="Horizontal dimension"><svg class="i16"><use href="#horizontal"/></svg></button>
        <button aria-label="Vertical dimension"><svg class="i16"><use href="#vertical"/></svg></button>
        <button aria-label="Angular dimension"><svg class="i16"><use href="#angular"/></svg></button>
        <button aria-label="Radial dimension"><svg class="i16"><use href="#radial"/></svg></button>
        <button aria-label="Diameter dimension"><svg class="i16"><use href="#diameter"/></svg></button>
        <hr>
        <button aria-label="Text annotation"><svg class="i16"><use href="#leader"/></svg></button>
        <button aria-label="Thread"><svg class="i16"><use href="#bolt"/></svg></button>
        <i class="more"></i>
      </div>
    </aside>

    <aside class="panel">
      <div class="panel-head">
        <span>Scene</span>
        <button aria-label="Panel menu"><i class="caret wide"></i></button>
        <button aria-label="Pin"><svg class="i16"><use href="#pin"/></svg></button>
        <button aria-label="Close"><svg class="i16"><use href="#close"/></svg></button>
      </div>
      <div class="search">
        <input type="text" placeholder="Search ..." aria-label="Search scene">
        <button class="clear" aria-label="Clear"><svg class="i16"><use href="#redx"/></svg></button>
        <button class="filter" aria-label="Filter tree"><svg class="i16"><use href="#tree-star"/></svg></button>
      </div>
      <ul class="tree">
        <li><svg class="i16"><use href="#part-red"/></svg><span>Scene1</span>
          <ul>
            <li><i class="plus"></i><svg class="i16"><use href="#axes"/></svg><span>Global Coordinate System</span></li>
            <li><i class="plus"></i><svg class="i16"><use href="#camera"/></svg><span>Cameras</span></li>
            <li><i class="plus"></i><svg class="i16"><use href="#light"/></svg><span>Lights</span></li>
          </ul>
        </li>
      </ul>
      <div class="panel-tabs">
        <button class="active"><svg class="i16"><use href="#tree"/></svg>Scene</button>
        <button><svg class="i16"><use href="#props"/></svg>Properties</button>
        <button><svg class="i16"><use href="#lens"/></svg>Search</button>
      </div>
    </aside>

    <section class="viewport">
      <svg class="triad" viewBox="0 0 50 40">
        <path d="M20 30V18" stroke="#8d8df2" stroke-width="4"/><path d="M16.500 21L20 11L23.500 21Z" fill="#2a1fb4"/>
        <path d="M18 27L12 25" stroke="#3fc45c" stroke-width="4"/><path d="M6 22L15 22L12 28Z" fill="#067a1c"/>
        <path d="M22 27L29 26" stroke="#f47a7a" stroke-width="4"/><path d="M36 23L26 23L29 29Z" fill="#8c0f14"/>
        <text x="18" y="6" fill="#1010f0">Z</text><text x="0" y="20" fill="#18e018">Y</text><text x="39" y="23" fill="#f01010">X</text>
      </svg>
    </section>
  </main>

  <section class="catalogbar">
    <button><svg class="i16"><use href="#catalog"/></svg>Catalog Browser</button>
  </section>

  <footer class="status">
    <span class="hint">For Help, press F1</span>
    <span class="viewsize">View size: 1582 x&nbsp; 776</span>
    <span class="units">Units: in, deg</span>
    <button class="w24" aria-label="Fit scene"><svg class="i16"><use href="#zoom-page"/></svg></button>
    <button class="w36" aria-label="Zoom window"><svg class="i16"><use href="#zoom-box"/></svg><i class="caret"></i></button>
    <button class="w36" aria-label="Look at"><svg class="i16"><use href="#look"/></svg><i class="caret"></i></button>
    <button class="w36" aria-label="View direction"><svg class="i16"><use href="#c-front"/></svg><i class="caret"></i></button>
    <button class="w34" aria-label="Camera"><svg class="i16"><use href="#cam-look"/></svg><i class="caret"></i></button>
    <button class="w24 on" aria-label="Perspective"><svg class="i16"><use href="#wedge"/></svg></button>
    <button class="w30" aria-label="Visibility"><svg class="i16"><use href="#glasses"/></svg><i class="caret"></i></button>
    <button class="w30 on" aria-label="Render style"><svg class="i16"><use href="#soft-cube"/></svg><i class="caret"></i></button>
    <button class="w36" aria-label="Part display"><svg class="i16"><use href="#blue-blocks"/></svg><i class="caret"></i></button>
    <button class="w24" aria-label="Reselect"><svg class="i16"><use href="#redo-cursor"/></svg></button>
    <button class="w24 on" aria-label="Select"><svg class="i16"><use href="#cursor"/></svg></button>
    <button class="w24" aria-label="Box select"><svg class="i16"><use href="#box-cursor"/></svg></button>
    <select class="combo muted any" aria-label="Filter"><option>Any</option></select>
    <select class="combo muted def" aria-label="Configuration"><option>Default</option></select>
  </footer>
</div>
</body>
</html>
```
FILE: styles.css
```css
* { box-sizing: border-box; }
html, body { height: 100%; margin: 0; }
body {
  background: #e5e5e5;
  color: #444;
  font: 12px/15px "Open Sans", "Noto Sans", sans-serif;
  overflow: hidden;
}
button, input, select { font: inherit; color: inherit; }
button {
  display: flex;
  flex: none;
  align-items: center;
  justify-content: center;
  padding: 0;
  border: 0;
  background: none;
  white-space: nowrap;
}
h1, h2 { margin: 0; font: inherit; }
svg { display: block; flex: none; }
.sprite { position: absolute; width: 0; height: 0; }
.i10 { width: 10px; height: 10px; }
.i16 { width: 16px; height: 16px; }
.i32 { width: 32px; height: 32px; }
.faded { filter: grayscale(1); opacity: .4; }

.w24 { width: 24px; }
.w30 { width: 30px; }
.w34 { width: 34px; }
.w36 { width: 36px; }
.w44 { width: 44px; }
.w48 { width: 48px; }
.w52 { width: 52px; }
.w56 { width: 56px; }
.w60 { width: 60px; }
.w62 { width: 62px; }
.w68 { width: 68px; }
.w74 { width: 74px; }
.w78 { width: 78px; }
.w80 { width: 80px; }
.w84 { width: 84px; }
.w88 { width: 88px; }
.w92 { width: 92px; }
.w98 { width: 98px; }
.w102 { width: 102px; }
.w112 { width: 112px; }

.caret {
  display: inline-block;
  flex: none;
  border: 3px solid transparent;
  border-top-color: currentColor;
  border-bottom-width: 0;
}
.caret.wide { border-width: 5px 5px 0; border-top-color: #666; }
.dash { width: 6px; height: 2px; background: #fff; }

.app { display: flex; flex-direction: column; height: 100%; min-width: 1540px; }

/* Title bar */
.titlebar { display: flex; flex: none; height: 30px; padding-bottom: 8px; background: #2b579a; color: #fff; }
.qat { display: flex; width: 480px; }
.qat button { width: 24px; }
.qat .narrow { width: 11px; }
.qat .on { background: #2f66b4; }
.logo { margin: 3px 7px 0 2px; }
.title { flex: 1; text-align: center; line-height: 27px; }
.winctl { display: flex; gap: 6px; width: 81px; }
.winctl button { width: 30px; }

/* Ribbon tabs */
.tabs { display: flex; flex: none; height: 26px; background: #2b579a; color: #fff; }
.tabs .active { background: #f0f0f0; color: #1b5fc4; }
.tabs-right { display: flex; gap: 8px; margin-left: auto; }
.tabs-right button { gap: 8px; }

/* Ribbon */
.ribbon { display: flex; flex: none; height: 99px; background: #f0f0f0; border-bottom: 1px solid #c8c8c8; }
.group { display: flex; flex-direction: column; padding: 0 2px 0 4px; border-right: 1px solid #d4d4d4; }
.group:first-child { padding: 0 0 0 7px; }
.group h2 { margin-top: auto; padding-bottom: 5px; text-align: center; color: #666; }
.tools { display: flex; padding-top: 7px; }
.big { flex-direction: column; justify-content: flex-start; text-align: center; gap: 3px; }
.big:disabled { color: #aaa; }
.big .caret { vertical-align: 3px; }
.stack { display: flex; flex-direction: column; margin-top: -3px; padding-left: 3px; }
.stack button { height: 22px; gap: 3px; justify-content: flex-start; }
.stack .caret { margin-left: 2px; }

/* Selection toolbar */
.selectbar { flex: none; height: 32px; padding: 1px 0 3px; }
.selectbar-inner { display: flex; align-items: center; width: 549px; height: 28px; padding-left: 4px; background: #f0f0f0; border-radius: 0 3px 3px 0; }
.selectbar-inner button { width: 24px; height: 19px; }
.selectbar-inner .boxed { width: 20px; border: 1px solid #ccc; }
.grip-v { width: 2px; height: 18px; margin-right: 4px; background: repeating-linear-gradient(#b0b0b0 0 2px, transparent 2px 4px); }
.combo {
  appearance: none;
  width: 145px;
  height: 23px;
  margin-right: 5px;
  padding: 0 3px;
  border: 1px solid #c6c6c6;
  border-radius: 0;
  color: #111;
  background:
    linear-gradient(45deg, transparent 50%, #666 50%) right 7px center / 3px 3px no-repeat,
    linear-gradient(-45deg, transparent 50%, #666 50%) right 4px center / 3px 3px no-repeat,
    #fff;
}
.combo.muted { color: #555; }
.combo:disabled {
  opacity: 1;
  border-color: #d0d0d0;
  background:
    linear-gradient(45deg, transparent 50%, #bbb 50%) right 7px center / 3px 3px no-repeat,
    linear-gradient(-45deg, transparent 50%, #bbb 50%) right 4px center / 3px 3px no-repeat,
    #e6e6e6;
}

/* Document tabs */
.doctabs { display: flex; flex: none; height: 21px; padding-left: 27px; border-bottom: 1px solid #c8c8c8; }
.doctab { position: relative; width: 104px; height: 21px; gap: 8px; padding-left: 30px; color: #333; }
.doctab-shape { position: absolute; inset: 0; width: 100%; height: 100%; }
.doctab b, .doctab .i16 { position: relative; }

/* Work area */
.work { display: flex; flex: 1; min-height: 0; }
.strip { display: flex; flex-direction: column; justify-content: flex-end; width: 26px; padding-bottom: 22px; }
.strip-inner { display: flex; flex-direction: column; background: #f0f0f0; }
.strip button { width: 26px; height: 22px; }
.strip hr { width: 22px; height: 1px; margin: 3px 2px; border: 0; background: #ccc; }
.grip-h { height: 2px; margin: 5px; background: repeating-linear-gradient(90deg, #b0b0b0 0 2px, transparent 2px 4px); }
.more { width: 3px; height: 6px; margin: 3px 7px; border: 3px solid transparent; border-right-color: #777; border-left: 0; }

.panel { display: flex; flex-direction: column; width: 304px; margin-right: 7px; }
.panel-head { display: flex; align-items: center; height: 24px; padding: 0 2px 0 3px; }
.panel-head span { flex: 1; }
.panel-head button { width: 19px; }
.search { display: flex; height: 20px; background: #fff; }
.search input { flex: 1; min-width: 0; padding: 0 3px 3px; border: 0; background: none; }
.search input::placeholder { color: #666; opacity: 1; }
.search button { width: 18px; height: 18px; }
.search .clear { border: 1px solid #999; background: #ece8d8; margin: 1px 2px 0 0; }
.search .filter { background: #ece8d8; margin: 1px 0 0; }
.tree { flex: 1; margin: 0; padding: 2px 4px; border: 1px solid #828790; background: #fff; color: #111; list-style: none; }
.tree ul {
  flex-basis: 100%;
  margin: 0;
  padding: 0 0 0 4px;
  list-style: none;
  background: linear-gradient(#999 50%, transparent 50%) 8px 0 / 1px 2px repeat-y;
}
.tree li { display: flex; flex-wrap: wrap; align-items: center; gap: 0 5px; line-height: 18px; }
.plus {
  width: 9px;
  height: 9px;
  border: 1px solid #888;
  background:
    linear-gradient(#234, #234) center / 5px 1px no-repeat,
    linear-gradient(#234, #234) center / 1px 5px no-repeat,
    #fff;
}
.plus::after { content: ""; display: block; width: 5px; margin: 3px 0 0 9px; border-top: 1px dotted #999; }
.tree ul .i16 { margin-left: 1px; }
.panel-tabs { display: flex; height: 22px; }
.panel-tabs button { gap: 2px; padding: 0 3px; }
.panel-tabs .active { background: #fff; border-right: 1px solid #aaa; }

.viewport {
  position: relative;
  flex: 1;
  border: solid #555;
  border-width: 1px 0 0 1px;
  background: linear-gradient(#5074a1, #7a9bbb 25%, #a0b2cf 44%, #becddc 62%, #dce2ee 78%, #fff);
}
.triad { position: absolute; left: 18px; bottom: 26px; width: 50px; height: 40px; overflow: visible; font: 9px "Liberation Sans", sans-serif; }

/* Bottom bars */
.catalogbar { display: flex; flex: none; height: 33px; padding-left: 7px; }
.catalogbar button { gap: 2px; padding: 3px 2px 0 0; border-bottom: 6px solid #d5d5d5; }
.status { display: flex; flex: none; height: 23px; padding: 0 2px; background: #f0f0f0; border-top: 1px solid #c8c8c8; line-height: 22px; }
.status button { gap: 5px; }
.status .on { background: #ccc; }
.hint { margin-right: auto; }
.viewsize { margin-right: 28px; }
.units { margin-right: 18px; }
.status .any { width: 88px; margin-right: 2px; }
.status .def { width: 65px; margin: 0; }
```
